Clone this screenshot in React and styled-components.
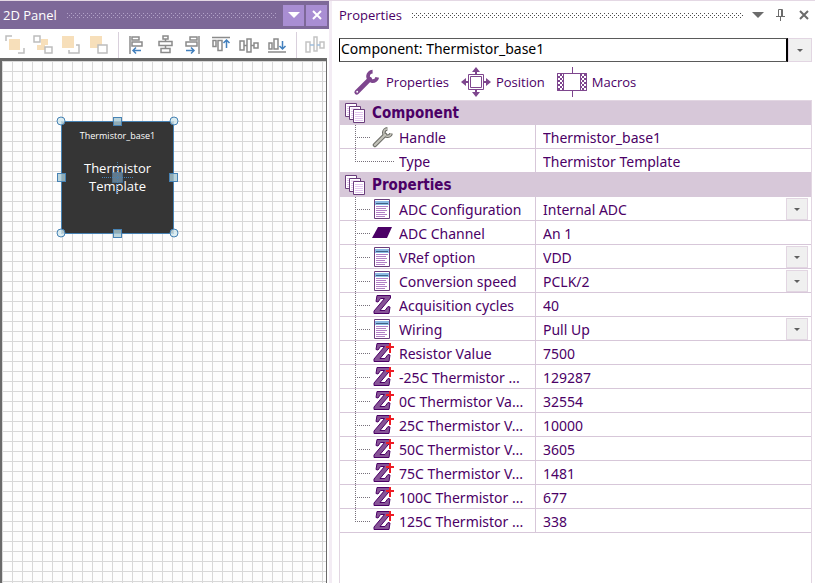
import React, { useId, useState } from 'react';
import styled, { createGlobalStyle } from 'styled-components';

const GlobalStyle = createGlobalStyle`
    * {
        box-sizing: border-box;
    }
    body {
        margin: 0;
        background: #fff;
        color: #4b0066;
        font-family: "Noto Sans", "Open Sans", sans-serif;
        font-size: 14px;
    }
    button, select, input {
        font: inherit;
        color: inherit;
        margin: 0;
        padding: 0;
        border: 0;
        border-radius: 0;
        background: none;
    }
    svg {
        display: block;
        flex: none;
    }
`;

const Workspace = styled.div`
    display: grid;
    grid-template-columns: minmax(240px, 329px) minmax(0, 1fr);
    min-height: 100vh;
    border-top: 1px solid #e4d8e4;
`;

const LeftPanel = styled.section`
    display: flex;
    flex-direction: column;
    min-width: 0;
`;

const RightPanel = styled.section`
    display: flex;
    flex-direction: column;
    min-width: 0;
    padding-left: 7px;
    border-left: 3px solid #f3ecf4;
`;

const TitleBar = styled.header`
    display: flex;
    align-items: center;
    height: 28px;
    padding: ${p => p.$active ? '0 2px 0 3px' : '0'};
    color: ${p => p.$active ? '#fff' : '#4b0066'};
    background: ${p => p.$active ? '#7d6898' : 'none'};
    h2 {
        margin: 0;
        font-family: "Open Sans", sans-serif;
        font-size: 13px;
        font-weight: 400;
        line-height: 20px;
    }
`;

const Grip = styled.div`
    flex: 1;
    height: 5px;
    margin: 0 ${p => p.$end}px 0 10px;
    overflow: hidden;
`;

const TitleButton = styled.button`
    display: grid;
    place-items: center;
    width: ${p => p.$filled ? 21 : 23}px;
    height: 21px;
    margin-left: ${p => p.$filled ? 2 : 0}px;
    background: ${p => p.$filled ? '#a98ed3' : 'none'};
`;

const Toolbar = styled.div`
    display: flex;
    align-items: center;
    height: 29px;
    padding: 2px 1px 0;
    overflow: hidden;
`;

const ToolButton = styled.button`
    display: grid;
    place-items: center;
    flex: none;
    width: 28px;
    height: 26px;
    opacity: ${p => p.$faded ? 0.5 : 1};
`;

const Divider = styled.span`
    flex: none;
    width: 1px;
    height: 26px;
    margin: 0 4px 0 5px;
    background: #d9d0dc;
`;

const Canvas = styled.div`
    position: relative;
    flex: 1;
    margin-right: 2px;
    border: solid #696969;
    border-width: 3px 1px 0 2px;
    background-color: #fdfdfd;
    background-image:
        linear-gradient(to right, #d8d8d8 1px, transparent 1px),
        linear-gradient(to bottom, #d8d8d8 1px, transparent 1px);
    background-size: 10px 10px;
`;

const Node = styled.div`
    position: absolute;
    left: 59px;
    top: 60px;
    display: flex;
    flex-direction: column;
    align-items: center;
    width: 113px;
    height: 113px;
    padding-top: 9px;
    background: #353535;
    color: #fff;
    font-family: "Open Sans", sans-serif;
    small {
        font-size: 9px;
        line-height: 12px;
    }
    strong {
        width: 80px;
        margin-top: 17px;
        font-size: 13px;
        font-weight: 400;
        line-height: 18px;
        text-align: center;
    }
    svg {
        position: absolute;
        left: -5px;
        top: -5px;
    }
`;

const Combo = styled.div`
    display: grid;
    grid-template-columns: minmax(0, 1fr) 24px;
    height: 24px;
    margin: 9px 3px 5px 0;
    select {
        grid-area: 1 / 1 / 2 / 3;
        width: 100%;
        height: 24px;
        padding: 0 0 3px 2px;
        appearance: none;
        color: #000;
    }
`;

const ComboFrame = styled.span`
    grid-area: 1 / 1;
    border: 1px solid #5a5a5a;
    border-left-color: #000;
    border-right: 2px solid #000;
    pointer-events: none;
`;

const Arrow = styled.span`
    grid-area: 1 / 2;
    display: grid;
    place-items: center;
    background: #f0f0f0;
    border: 1px solid #e2d6e2;
    pointer-events: none;
`;

const Tabs = styled.nav`
    display: flex;
    align-items: center;
    height: 30px;
    margin-bottom: 3px;
    padding-left: 14px;
`;

const Tab = styled.button`
    display: flex;
    align-items: center;
    gap: 5px;
    height: 30px;
    margin-right: 12px;
    font-family: "Open Sans", sans-serif;
    font-size: 13px;
    line-height: 20px;
`;

const GridFrame = styled.div`
    flex: 1;
    margin-right: 3px;
    border: 1px solid #e2d6e2;
    border-bottom: 0;
`;

const Table = styled.table`
    width: 100%;
    table-layout: fixed;
    border-spacing: 0;
    th, td {
        height: 24px;
        padding: 0;
        font-weight: 400;
        text-align: left;
        line-height: 20px;
    }
`;

const NameCol = styled.col`
    width: 195px;
`;

const SectionRow = styled.tr`
    background: #d7c8d9;
    th > div {
        display: flex;
        align-items: center;
        gap: 7px;
        padding-left: 5px;
        font-family: "DejaVu Sans Condensed", "DejaVu Sans", sans-serif;
        font-size: 15px;
        font-weight: 700;
    }
`;

const Row = styled.tr`
    th, td {
        border-bottom: 1px solid #d7c7d9;
    }
    td {
        border-left: 1px solid #d7c7d9;
    }
`;

const NameCell = styled.div`
    display: flex;
    align-items: center;
    height: 23px;
    padding-left: 15px;
    padding-right: 4px;
    label {
        flex: 1;
        margin-left: 5px;
        padding-top: 2px;
        overflow: hidden;
        text-overflow: ellipsis;
        white-space: nowrap;
    }
`;

const ValueCell = styled.div`
    display: grid;
    grid-template-columns: minmax(0, 1fr) 22px;
    height: 23px;
    padding-right: 3px;
    select, input {
        grid-area: 1 / 1 / 2 / 3;
        width: 100%;
        height: 23px;
        padding: 2px 0 0 7px;
        appearance: none;
    }
    ${Arrow} {
        margin-top: 1px;
    }
`;

const Dots = ({ color }) => {
    const id = useId();
    return (
        <svg width="100%" height="5">
            <pattern id={id} width="4" height="4" patternUnits="userSpaceOnUse">
                <rect width="1" height="1" fill={color} />
                <rect x="2" y="2" width="1" height="1" fill={color} />
            </pattern>
            <rect width="100%" height="5" fill={`url(#${id})`} />
        </svg>
    );
};

const Triangle = ({ size, color }) => (
    <svg width={size} height={size / 2} viewBox="0 0 10 5">
        <path d="M0 0h10L5 5z" fill={color} />
    </svg>
);

const Cross = ({ color }) => (
    <svg width="10" height="10" viewBox="0 0 10 10">
        <path d="M1 1l8 8M9 1L1 9" stroke={color} strokeWidth="2" />
    </svg>
);

const toolShapes = {
    'Bring to front': (
        <>
            <path d="M1 6V1h6M19 13v5h-6" stroke="#bdbdbd" />
            <path d="M4 4h11v11H4z" fill="#f7dfba" stroke="none" />
        </>
    ),
    'Bring forward': (
        <>
            <path d="M8 4h7v6h-3v5H4v-5h4z" fill="#f7dfba" stroke="none" />
            <path d="M1 1h6v6H1zM12 12h7v6h-7z" fill="#fff" stroke="#bdbdbd" />
        </>
    ),
    'Send to back': (
        <>
            <path d="M1 1h12v12H1z" fill="#f7dfba" stroke="none" />
            <path d="M15 10h3v8H8v-3" stroke="#bdbdbd" />
        </>
    ),
    'Send backward': (
        <>
            <path d="M1 1h12v12H1z" fill="#f7dfba" stroke="none" />
            <path d="M9 10h9v8H9z" fill="#fff" stroke="#bdbdbd" />
        </>
    ),
    'Align left': (
        <>
            <path d="M3 1v18" />
            <path d="M5 2h7v3H5zM5 7h10v4H5z" />
            <path d="M6 15.500h8M9 12.500l-3 3 3 3" stroke="#4380bd" />
        </>
    ),
    'Align centre': (
        <>
            <path d="M10.500 2v16" />
            <path d="M8 1h5v3H8zM4 6.500h13v4H4zM6 13.500h9v4H6z" fill="#fff" />
        </>
    ),
    'Align right': (
        <>
            <path d="M16 1v18" />
            <path d="M7 2h7v3H7zM3 7h11v4H3z" />
            <path d="M3 15.500h8M8 12.500l3 3-3 3" stroke="#4380bd" />
        </>
    ),
    'Align top': (
        <>
            <path d="M1 2.500h18" />
            <path d="M2 5.500h3v6H2zM7 5.500h4v10H7z" />
            <path d="M15.500 5v8M12.500 8l3-3 3 3" stroke="#4380bd" />
        </>
    ),
    'Align middle': (
        <>
            <path d="M2 10.500h16" />
            <path d="M1 6h4v9H1zM8 4h4v13H8zM15 8h4v5h-4z" fill="#fff" />
        </>
    ),
    'Align bottom': (
        <>
            <path d="M1 17h18" />
            <path d="M2 8h3v6H2zM7 4h4v10H7z" />
            <path d="M15.500 6v8M12.500 11l3 3 3-3" stroke="#4380bd" />
        </>
    ),
    'Space evenly': (
        <>
            <path d="M1 7h4v10H1zM9 2h3v14H9zM15 7h4v6h-4z" fill="#fff" />
            <path d="M5 10h4M12 10h3" stroke="#4380bd" />
        </>
    ),
};

const ToolIcon = ({ name }) => (
    <svg width="20" height="20" viewBox="0 0 20 20" fill="none" stroke="#8b8b8b" strokeWidth="1.500">
        {toolShapes[name]}
    </svg>
);

const Tools = ({ names, faded }) => names.map(name =>
    <ToolButton key={name} aria-label={name} $faded={faded}>
        <ToolIcon name={name} />
    </ToolButton>
);

// resize handles round the selected component
const Selection = () => (
    <svg width="123" height="123" viewBox="0 0 123 123" fill="#a9c9d3" fillOpacity="0.8" stroke="#4682b4">
        <path d="M5.500 5.500h112v112h-112z" fill="none" />
        {[[5, 5], [118, 5], [5, 117], [118, 117]].map(([x, y]) =>
            <circle key={`${x}-${y}`} cx={x} cy={y} r="4" fill="#d3e8ee" />
        )}
        {[[61, 5], [5, 61], [117, 61], [61, 117]].map(([x, y]) =>
            <rect key={`${x}-${y}`} x={x - 3.5} y={y - 3.5} width="8" height="8" />
        )}
        <rect x="56.500" y="56.500" width="10" height="10" fill="#7799b0" fillOpacity="0.7" strokeDasharray="1 1" />
        <path d="M46 61.500h31M61.500 46v31" strokeDasharray="1 1" />
    </svg>
);

const Wrench = ({ color, width }) => (
    <g fill="none" stroke={color} strokeLinecap="round">
        <path d="M4 26L18 12" strokeWidth={width + 1} />
        <path d="M21 4a5 5 0 1 0 5 6" strokeLinecap="butt" strokeWidth={width} />
    </g>
);

const WrenchIcon = () => (
    <svg width="28" height="28" viewBox="0 0 30 30">
        <Wrench color="#7e468e" width={4} />
        <circle cx="4.500" cy="25.500" r="1" fill="#fff" />
    </svg>
);

const PositionIcon = () => (
    <svg width="30" height="30" viewBox="0 0 30 30" fill="none" stroke="#7e468e">
        <path d="M7.500 7.500h15v15h-15zM9.500 9.500h11v11h-11z" />
        <path d="M15 4v4M15 22v4M4 15h4M22 15h4" strokeWidth="2" />
        <path d="M15 0l4 5h-8zM15 30l4-5h-8zM0 15l5-4v8zM30 15l-5-4v8z" fill="#7e468e" stroke="none" />
    </svg>
);

const MacroIcon = () => {
    const id = useId();
    return (
        <svg width="30" height="30" viewBox="0 0 30 30" fill="none" stroke="#7e468e">
            <pattern id={id} width="4" height="4" patternUnits="userSpaceOnUse">
                <path d="M0 0l4 4M4 0L0 4" stroke="#7e468e" />
            </pattern>
            <path d="M15.500 0v7M15.500 24v6" />
            <path d="M.5 6.500h29v17H.5z" fill="#fff" />
            <path d="M.5 6.500h6v17h-6zM23.500 6.500h6v17h-6z" fill={`url(#${id})`} />
        </svg>
    );
};

const PagesIcon = () => (
    <svg width="20" height="20" viewBox="0 0 20 20" fill="#fff" stroke="#6a3d7c">
        <path d="M.5.5h11v13H.5z" />
        <path d="M2 3.500h8M2 5.500h2M2 7.500h2M2 9.500h2M2 11.500h2" stroke="#e3c6ef" />
        <path d="M4.500 3.500h11v13h-11z" />
        <path d="M6 6h8M6 8.500h2M6 10.500h2M6 12.500h2M6 14.500h2" stroke="#e3c6ef" />
        <path d="M8.500 6.500h11v13h-11z" />
        <path d="M10 9.500h8M10 11.500h8M10 13.500h8M10 15.500h8M10 17.500h8" stroke="#e3c6ef" />
    </svg>
);

const Zed = () => (
    <path
        d="M5 1.500h13.500V4L8 16.500h5l3-4 2 .5-1 6.500H2V17L12.500 4.500H8.500L6 8l-2-.5z"
        fill="#865396"
        stroke="#4b0066"
    />
);

const rowIcons = {
    wrench: (
        <svg width="22" height="22" viewBox="0 0 30 30">
            <Wrench color="#6d6d68" width={5} />
            <Wrench color="#c3c3ba" width={2} />
        </svg>
    ),
    list: (
        <svg width="20" height="20" viewBox="0 0 20 20" fill="none">
            <path d="M2.500.5h15v19h-15z" fill="#fff" stroke="#6a3d7c" />
            <path d="M3 2h14v4H3z" fill="#8dbbe5" />
            <path d="M4 4.500h12" stroke="#3f6285" />
            <path d="M4 7.500h12M4 9.500h10M4 11.500h11M4 13.500h9M4 15.500h11M4 17.500h9" stroke="#b27fc6" />
        </svg>
    ),
    channel: (
        <svg width="20" height="20" viewBox="0 0 20 20">
            <path d="M6 4h14l-5 11H0z" fill="#4b0066" />
        </svg>
    ),
    number: (
        <svg width="22" height="21" viewBox="0 0 22 21">
            <Zed />
        </svg>
    ),
    numberPlus: (
        <svg width="22" height="21" viewBox="0 0 22 21">
            <Zed />
            <path d="M18 1v10M14 5h8" stroke="#ee1c25" strokeWidth="2" />
        </svg>
    ),
};

// dotted tree lines drawn in front of a row's icon
const Branch = ({ last, wide }) => (
    <svg width={wide ? 39 : 17} height="24" viewBox={`0 0 ${wide ? 39 : 17} 24`} stroke="#76707a" strokeDasharray="1 1">
        <path d={`M.5 0v${last ? 12 : 24}M0 12.500h${wide ? 39 : 15}`} fill="none" />
    </svg>
);

const sections = [
    {
        title: 'Component',
        rows: [
            { name: 'Handle', value: 'Thermistor_base1', icon: 'wrench' },
            { name: 'Type', value: 'Thermistor Template' },
        ],
    },
    {
        title: 'Properties',
        rows: [
            { name: 'ADC Configuration', value: 'Internal ADC', icon: 'list' },
            { name: 'ADC Channel', value: 'An 1', icon: 'channel' },
            { name: 'VRef option', value: 'VDD', icon: 'list' },
            { name: 'Conversion speed', value: 'PCLK/2', icon: 'list' },
            { name: 'Acquisition cycles', value: '40', icon: 'number' },
            { name: 'Wiring', value: 'Pull Up', icon: 'list' },
            { name: 'Resistor Value', value: '7500', icon: 'numberPlus' },
            { name: '-25C Thermistor ...', value: '129287', icon: 'numberPlus' },
            { name: '0C Thermistor Va...', value: '32554', icon: 'numberPlus' },
            { name: '25C Thermistor V...', value: '10000', icon: 'numberPlus' },
            { name: '50C Thermistor V...', value: '3605', icon: 'numberPlus' },
            { name: '75C Thermistor V...', value: '1481', icon: 'numberPlus' },
            { name: '100C Thermistor ...', value: '677', icon: 'numberPlus' },
            { name: '125C Thermistor ...', value: '338', icon: 'numberPlus' },
        ],
    },
];

const IconSlot = styled.span`
    display: grid;
    place-items: center start;
    flex: none;
    width: 22px;
`;

const PropertyRow = ({ row, last }) => {
    const id = useId();
    const [value, setValue] = useState(row.value);
    const isList = row.icon === 'list';

    return (
        <Row>
            <th scope="row">
                <NameCell>
                    <Branch last={last} wide={!row.icon} />
                    {row.icon && <IconSlot>{rowIcons[row.icon]}</IconSlot>}
                    <label htmlFor={id}>{row.name}</label>
                </NameCell>
            </th>
            <td>
                <ValueCell>
                    {
                        isList ?
                        <>
                            <select id={id} defaultValue={value}>
                                <option>{value}</option>
                            </select>
                            <Arrow><Triangle size={6} color="#606060" /></Arrow>
                        </>
                        :
                        <input id={id} value={value} onChange={e => setValue(e.target.value)} />
                    }
                </ValueCell>
            </td>
        </Row>
    );
};

const App = () => (
    <>
        <GlobalStyle />
        <Workspace>
            <LeftPanel>
                <TitleBar $active>
                    <h2>2D Panel</h2>
                    <Grip $end={5}><Dots color="#b3a3c8" /></Grip>
                    <TitleButton $filled aria-label="Panel menu"><Triangle size={12} color="#fff" /></TitleButton>
                    <TitleButton $filled aria-label="Close panel"><Cross color="#fff" /></TitleButton>
                </TitleBar>
                <Toolbar>
                    <Tools names={['Bring to front', 'Bring forward', 'Send to back', 'Send backward']} />
                    <Divider />
                    <Tools names={['Align left', 'Align centre', 'Align right', 'Align top', 'Align middle', 'Align bottom']} />
                    <Divider />
                    <Tools names={['Space evenly']} faded />
                </Toolbar>
                <Canvas>
                    <Node>
                        <small>Thermistor_base1</small>
                        <strong>Thermistor Template</strong>
                        <Selection />
                    </Node>
                </Canvas>
            </LeftPanel>
            <RightPanel>
                <TitleBar>
                    <h2>Properties</h2>
                    <Grip $end={3}><Dots color="#4a4a4a" /></Grip>
                    <TitleButton aria-label="Properties menu"><Triangle size={12} color="#6b6b6b" /></TitleButton>
                    <TitleButton aria-label="Pin">
                        <svg width="9" height="12" viewBox="0 0 9 12" fill="none" stroke="#6b6b6b">
                            <path d="M2.500 7V.5h4V7M5.500 1v6M0 7.500h9M4.500 8v4" />
                        </svg>
                    </TitleButton>
                    <TitleButton aria-label="Close properties"><Cross color="#6b6b6b" /></TitleButton>
                </TitleBar>
                <Combo>
                    <select aria-label="Component">
                        <option>Component: Thermistor_base1</option>
                    </select>
                    <ComboFrame />
                    <Arrow><Triangle size={6} color="#606060" /></Arrow>
                </Combo>
                <Tabs>
                    <Tab><WrenchIcon />Properties</Tab>
                    <Tab><PositionIcon />Position</Tab>
                    <Tab><MacroIcon />Macros</Tab>
                </Tabs>
                <GridFrame>
                    <Table>
                        <colgroup>
                            <NameCol />
                            <col />
                        </colgroup>
                        {
                            sections.map(section =>
                                <tbody key={section.title}>
                                    <SectionRow>
                                        <th colSpan={2} scope="rowgroup">
                                            <div><PagesIcon />{section.title}</div>
                                        </th>
                                    </SectionRow>
                                    {section.rows.map((row, i) =>
                                        <PropertyRow key={row.name} row={row} last={i === section.rows.length - 1} />
                                    )}
                                </tbody>
                            )
                        }
                    </Table>
                </GridFrame>
            </RightPanel>
        </Workspace>
    </>
);

export default App;
